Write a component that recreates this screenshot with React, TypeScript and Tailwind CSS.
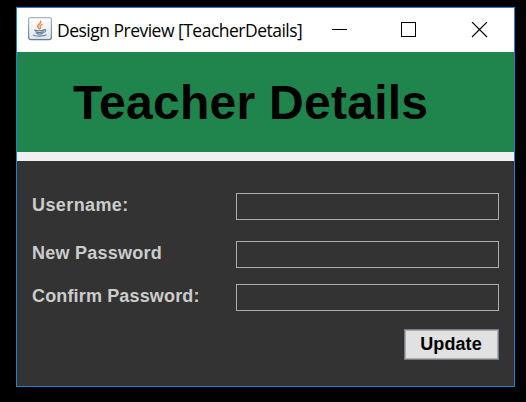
import React from "react";

function JavaIcon() {
  return (
    <svg width="24" height="24" viewBox="0 0 24 24" className="mb-0.5 block shrink-0">
      <defs>
        <linearGradient id="tile" x1="0" y1="0" x2="0" y2="1">
          <stop offset="0" stopColor="#ffffff" />
          <stop offset="0.5" stopColor="#f1f2f4" />
          <stop offset="1" stopColor="#dfe3e8" />
        </linearGradient>
        <linearGradient id="edge" x1="0" y1="0" x2="0" y2="1">
          <stop offset="0" stopColor="#a9b4bf" />
          <stop offset="1" stopColor="#5f7f9b" />
        </linearGradient>
      </defs>
      <rect x="0.6" y="0.6" width="22.8" height="22" rx="2" fill="url(#tile)" stroke="url(#edge)" strokeWidth="1.2" />
      <g fill="none" stroke="#ef8a3c" strokeLinecap="round">
        <path d="M12.6 4.300c1.200 2.200-3.600 3.100-2.900 5.200.2 1 1.300 1.700 1.500 2.300" strokeWidth="1.600" />
        <path d="M14.300 7.200c-2 .9-2.900 1.700-1.900 2.900.6.800.2 1.300-.4 1.700" strokeWidth="1.200" />
      </g>
      <g fill="none" stroke="#5c7f9b" strokeLinecap="round">
        <path d="M6.600 13.100c2.200.700 6.700.700 9.400.1" strokeWidth="1.200" />
        <path d="M7.700 14.900c2 .7 5.300.7 7.600 0" strokeWidth="1.200" />
        <path d="M8.600 16.600c1.800.6 4.300.6 6 0" strokeWidth="1.100" />
        <path d="M16 12.600c2.300-.5 2.300 2.100-.3 3" strokeWidth="1.100" />
        <path d="M5.500 18.100c1.500 1.300 9.500 1.400 12.500-.1" strokeWidth="1.200" />
      </g>
    </svg>
  );
}

function WindowControls() {
  return (
    <svg width="157" height="16" viewBox="0 0 157 16" shapeRendering="crispEdges" className="block shrink-0">
      <path d="M0 7.500h15" stroke="#000" />
      <path d="M69.500 .5h14v14h-14z" fill="none" stroke="#000" />
      <path d="M140 0l15 15M155 0l-15 15" stroke="#000" strokeWidth="1.100" shapeRendering="auto" />
    </svg>
  );
}

function Field({ label, className, tracking }: { label: string; className: string; tracking: string }) {
  return (
    <label className={`flex h-[27px] items-center justify-between ${className}`}>
      <span className={`mb-1 whitespace-nowrap text-[18px] font-bold leading-[20px] text-[#cccccc] ${tracking}`}>{label}</span>
      <input className="h-[27px] w-[263px] rounded-none border border-[#abadb3] bg-transparent px-1 text-[#cccccc] outline-none" />
    </label>
  );
}

export default function App() {
  return (
    <div className="h-[402px] w-[526px] overflow-hidden bg-black pl-4 pt-[7px] font-['Liberation_Sans',Arial,sans-serif]">
      <main className="flex h-[380px] w-[499px] flex-col border border-[#1883d7] bg-[#333333]">
        <header className="flex h-11 shrink-0 items-center bg-white pl-[11px]">
          <JavaIcon />
          <span className="ml-[5px] w-[275px] shrink-0 whitespace-nowrap font-['Open_Sans','Noto_Sans',sans-serif] text-[17.5px] leading-[24px] tracking-[-0.51px] text-black">
            Design Preview [TeacherDetails]
          </span>
          <WindowControls />
        </header>
        <h1 className="h-[100px] shrink-0 whitespace-nowrap bg-[#20844d] pl-[56px] text-[48px] font-bold leading-[101px] tracking-[0.27px] text-black">
          Teacher Details
        </h1>
        <div className="h-[9px] shrink-0 bg-[#f0f0f0]" />
        <form className="flex flex-col pl-[15px] pr-[15px] pt-8">
          <Field label="Username:" className="" tracking="tracking-[0.4px]" />
          <Field label="New Password" className="mt-[21px]" tracking="tracking-[0.25px]" />
          <Field label="Confirm Password:" className="mt-4" tracking="tracking-[0.15px]" />
          <button
            type="button"
            className="mt-[18px] h-[31px] w-[95px] self-end border border-[#707c87] bg-[#e1e1e1] pr-px text-[18px] font-bold leading-[27px] tracking-[0.1px] text-black shadow-[inset_0_0_0_1px_#adadad]"
          >
            Update
          </button>
        </form>
      </main>
    </div>
  );
}
